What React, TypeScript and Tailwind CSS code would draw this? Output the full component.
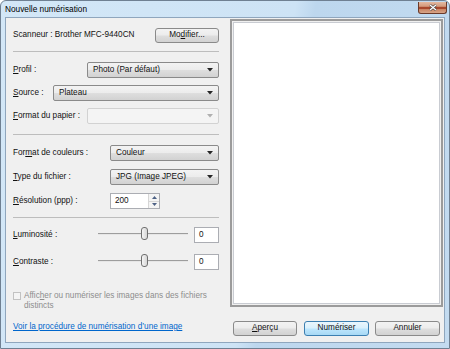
import React from "react";

const btnFace =
  "bg-[linear-gradient(#f3f3f3_0%,#ececec_48%,#dedede_52%,#d2d2d2_100%)] border-[#8a8a8a]";

const Combo = ({ value, w, disabled }: any) => (
  <div
    className={`flex h-[16px] items-center rounded-[2px] border pl-[5px] pr-[5px] ${w} ${
      disabled ? "border-[#d2d2d2] bg-[#f4f4f4]" : btnFace
    }`}
  >
    <span className="flex-1 leading-none">{value}</span>
    <svg width="6" height="4" viewBox="0 0 6 4">
      <path d="M0 0h6L3 3.5z" fill={disabled ? "#b0b0b0" : "#262626"} />
    </svg>
  </div>
);

const Button = ({ children, w, primary }: any) => (
  <div
    className={`flex h-[15px] items-center justify-center rounded-[3px] border ${w} ${
      primary
        ? "border-[#3c7fb1] bg-[linear-gradient(#eaf6fd_0%,#d9f0fc_48%,#bee6fd_52%,#a7d9f5_100%)]"
        : btnFace
    }`}
  >
    {children}
  </div>
);

const Separator = ({ mt }: any) => (
  <div className={`${mt} h-[2px] border-t border-[#bdbdbd]`} />
);

const TextBox = ({ value, w }: any) => (
  <div
    className={`flex h-[16px] items-center border border-[#abadb3] bg-white pl-[4px] ${w}`}
  >
    {value}
  </div>
);

const Slider = () => (
  <div className="relative h-[16px] w-[90px]">
    <div className="absolute left-0 right-0 top-[6px] h-[2px] border-t border-[#9d9d9d] bg-[#e6e6e6]" />
    <div className="absolute left-[43px] top-[0px] h-[13px] w-[7px] rounded-[3px] border border-[#707070] bg-[linear-gradient(90deg,#f6f6f6,#d6d6d6)]" />
  </div>
);

export default function App() {
  return (
    <div className="h-[349px] w-[450px] overflow-hidden font-['Liberation_Sans',Arial,sans-serif] text-[8.2px] text-[#111]">
      <div className="flex h-full flex-col rounded-t-[6px] border border-[#6f8092] bg-[linear-gradient(100deg,#d3e7f7_0%,#cde3f5_58%,#bdd7ee_62%,#c3dbf0_100%)]">
        {/* title bar */}
        <div className="flex h-[16px] items-center">
          <span className="ml-[4px] text-[8.3px] text-black">Nouvelle numérisation</span>
          <div className="ml-auto mr-[2px] flex h-[12px] w-[29px] -translate-y-[1px] items-center justify-center rounded-b-[3px] border border-t-0 border-[#6b3a2a] bg-[linear-gradient(#e3b9a0_0%,#d49a7c_40%,#a8482c_45%,#a8482c_60%,#c98464_65%,#d7a588_100%)]">
            <svg width="8" height="7" viewBox="0 0 8 7">
              <path d="M1 1l6 5M7 1L1 6" stroke="#404040" strokeWidth="2.4" />
              <path d="M1 1l6 5M7 1L1 6" stroke="#ffffff" strokeWidth="1.3" />
            </svg>
          </div>
        </div>

        {/* client area */}
        <div className="mx-[4px] flex h-[326px] border border-[#8fa6bd] bg-[#f0f0f0]">
          {/* left column */}
          <div className="flex w-[224px] flex-col pl-[7px] pr-[11px]">
            <div className="mt-[10px] flex h-[15px] items-center">
              <span>Scanneur : Brother MFC-9440CN</span>
              <div className="ml-auto">
                <Button w="w-[64px]">
                  Mo<u>d</u>ifier...
                </Button>
              </div>
            </div>

            <Separator mt="mt-[8px]" />

            <div className="mt-[9px] flex items-center">
              <span>
                <u>P</u>rofil :
              </span>
              <div className="ml-auto">
                <Combo value="Photo (Par défaut)" w="w-[132px]" />
              </div>
            </div>
            <div className="mt-[7px] flex items-center">
              <span>
                <u>S</u>ource :
              </span>
              <div className="ml-auto">
                <Combo value="Plateau" w="w-[166px]" />
              </div>
            </div>
            <div className="mt-[7px] flex items-center">
              <span>
                <u>F</u>ormat du papier :
              </span>
              <div className="ml-auto">
                <Combo value="" w="w-[132px]" disabled />
              </div>
            </div>

            <Separator mt="mt-[10px]" />

            <div className="mt-[9px] flex items-center">
              <span>
                For<u>m</u>at de couleurs :
              </span>
              <div className="ml-auto">
                <Combo value="Couleur" w="w-[109px]" />
              </div>
            </div>
            <div className="mt-[8px] flex items-center">
              <span>
                <u>T</u>ype du fichier :
              </span>
              <div className="ml-auto">
                <Combo value="JPG (Image JPEG)" w="w-[109px]" />
              </div>
            </div>
            <div className="mt-[8px] flex items-center">
              <span className="w-[97px]">
                <u>R</u>ésolution (ppp) :
              </span>
              <div className="flex h-[16px] w-[50px] items-center border border-[#abadb3] bg-white pl-[4px]">
                <span className="flex-1">200</span>
                <div className="flex h-full w-[11px] flex-col border-l border-[#d6d6d6]">
                  <div className="flex flex-1 items-center justify-center border-b border-[#d6d6d6] bg-[#f4f4f4]">
                    <svg width="5" height="3" viewBox="0 0 5 3">
                      <path d="M0 3h5L2.5 0z" fill="#4d6185" />
                    </svg>
                  </div>
                  <div className="flex flex-1 items-center justify-center bg-[#f4f4f4]">
                    <svg width="5" height="3" viewBox="0 0 5 3">
                      <path d="M0 0h5L2.5 3z" fill="#4d6185" />
                    </svg>
                  </div>
                </div>
              </div>
            </div>

            <Separator mt="mt-[8px]" />

            <div className="mt-[8px] flex items-center">
              <span className="w-[85px]">
                <u>L</u>uminosité :
              </span>
              <Slider />
              <div className="ml-auto">
                <TextBox value="0" w="w-[25px]" />
              </div>
            </div>
            <div className="mt-[11px] flex items-center">
              <span className="w-[85px]">
                <u>C</u>ontraste :
              </span>
              <Slider />
              <div className="ml-auto">
                <TextBox value="0" w="w-[25px]" />
              </div>
            </div>

            <div className="mt-[21px] flex items-start text-[#8d8d8d]">
              <div className="mt-[1px] h-[8px] w-[8px] border border-[#c2c2c2] bg-[#f4f4f4]" />
              <span className="ml-[3px] leading-[10px]">
                Affic<u>h</u>er ou numériser les images dans des fichiers
                <br />
                distincts
              </span>
            </div>

            <div className="mt-[11px] leading-[10px] text-[#0066cc] underline">
              Voir la procédure de numérisation d’une image
            </div>
          </div>

          {/* right column */}
          <div className="flex flex-1 flex-col">
            <div className="mt-[1px] h-[288px] w-[213px] border-2 border-[#9b9b9b] bg-[#f0f0f0] p-[1px]">
              <div className="h-full w-full border border-[#c9ccd2] bg-white" />
            </div>
            <div className="mt-[14px] flex pl-[3px]">
              <Button w="w-[64px]">
                <u>A</u>perçu
              </Button>
              <div className="ml-[7px]">
                <Button w="w-[65px]" primary>
                  Numériser
                </Button>
              </div>
              <div className="ml-[6px]">
                <Button w="w-[65px]">Annuler</Button>
              </div>
            </div>
          </div>
        </div>
      </div>
    </div>
  );
}
